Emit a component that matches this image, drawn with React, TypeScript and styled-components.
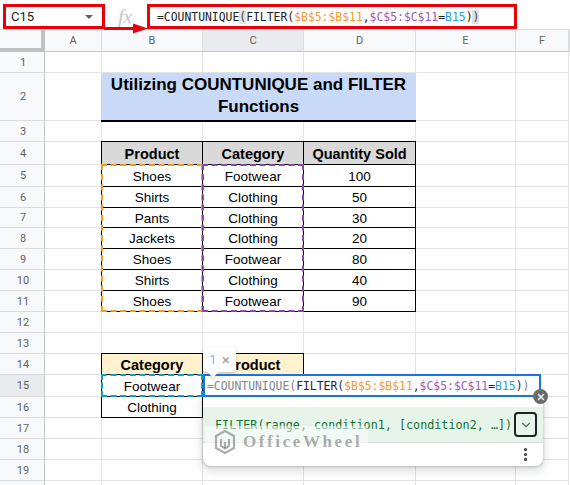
import React from "react";
import styled, { createGlobalStyle, css } from "styled-components";
import { ChevronDown, EllipsisVertical, X } from "lucide-react";

const GlobalStyle = createGlobalStyle`
  body {
    margin: 0;
    background: #fff;
  }
  * {
    box-sizing: border-box;
  }
`;

const COLS = ["A", "B", "C", "D", "E", "F"];
const ROW_HEIGHTS = [21, 48, 21, 23, 22, 21, 20, 21, 21, 21, 21, 21, 21, 21, 22, 21, 21, 21, 21, 21];
const ACTIVE_COL = "C";
const ACTIVE_ROW = 15;

const MONO = `"DejaVu Sans Mono", "Liberation Mono", monospace`;
const ARIAL = `"Liberation Sans", Arial, sans-serif`;

const Page = styled.div`
  position: relative;
  width: 570px;
  height: 485px;
  overflow: hidden;
  background: #fff;
  font-family: Roboto, "Liberation Sans", sans-serif;
`;

/* ---------- formula bar ---------- */

const TopBar = styled.div`
  display: flex;
  align-items: flex-start;
  height: 30px;
  padding-top: 4px;
  border-bottom: 1px solid #dadce0;
`;

const NameBox = styled.div`
  margin-left: 3px;
  width: 102px;
  height: 25px;
  border: 3px solid #e8000b;
  padding: 0 9px 0 5px;
  display: flex;
  align-items: center;
  justify-content: space-between;
  font-size: 13px;
  color: #202124;
`;

const Caret = styled.span`
  width: 0;
  height: 0;
  border-left: 4px solid transparent;
  border-right: 4px solid transparent;
  border-top: 4px solid #5f6368;
`;

const FxLabel = styled.div`
  width: 42px;
  height: 25px;
  display: flex;
  align-items: center;
  justify-content: center;
  font-family: "Liberation Serif", serif;
  font-style: italic;
  font-size: 19px;
  color: #c4c4c4;
  padding-right: 2px;
`;

const FormulaBox = styled.div`
  width: 370px;
  height: 25px;
  border: 3px solid #e8000b;
  padding-left: 7px;
  display: flex;
  align-items: center;
  font-family: ${MONO};
  font-size: 11.4px;
  color: #202124;
  white-space: pre;
`;

const Tok = styled.span<{ $c?: string }>`
  color: ${(p) => p.$c ?? "inherit"};
`;

const Paren = styled.span`
  background: #e3e3e3;
  color: #444;
`;

const ArrowSvg = styled.svg`
  position: absolute;
  left: 100px;
  top: 18px;
  pointer-events: none;
`;

/* ---------- sheet grid ---------- */

type Place = { $c: number; $r: number; $cs?: number; $rs?: number };

// $c is the grid column (1 = row headers, 2 = A ...), $r the sheet row (0 = column headers)
const placed = css<Place>`
  grid-column: ${(p) => p.$c} / span ${(p) => p.$cs ?? 1};
  grid-row: ${(p) => p.$r + 1} / span ${(p) => p.$rs ?? 1};
`;

const Sheet = styled.div`
  display: grid;
  grid-template-columns: 45px 57px 101px 101px 112px 100px 1fr;
  grid-template-rows: 22px ${ROW_HEIGHTS.map((h) => `${h}px`).join(" ")};
`;

const Corner = styled.div<Place>`
  ${placed};
  background: #f8f9fa;
  border-right: 4px solid #c0c0c0;
  border-bottom: 4px solid #c0c0c0;
`;

const ColHeader = styled.div<Place & { $active?: boolean }>`
  ${placed};
  background: ${(p) => (p.$active ? "#e8eaed" : "#f8f9fa")};
  border-right: 1px solid #dcdcdc;
  border-bottom: 1px solid #c4c7c5;
  display: flex;
  align-items: center;
  justify-content: center;
  font-size: 11px;
  color: #5f6368;
`;

const RowHeader = styled.div<Place & { $active?: boolean }>`
  ${placed};
  background: ${(p) => (p.$active ? "#e8eaed" : "#f8f9fa")};
  border-right: 1px solid #c4c7c5;
  border-bottom: 1px solid #dcdcdc;
  display: flex;
  align-items: center;
  justify-content: center;
  font-size: 11px;
  color: #5f6368;
  padding-left: 2px;
`;

const Cell = styled.div<Place>`
  ${placed};
  border-right: 1px solid #e2e3e3;
  border-bottom: 1px solid #e2e3e3;
`;

const Title = styled.div<Place>`
  ${placed};
  z-index: 1;
  margin: 0 0 -1px -1px;
  background: #c9daf8;
  border-bottom: 2px solid #000;
  display: flex;
  align-items: center;
  justify-content: center;
  text-align: center;
  font-family: ${ARIAL};
  font-weight: bold;
  font-size: 17px;
  line-height: 22px;
  color: #000;
  padding-bottom: 1px;
`;

const TableCell = styled.div<Place & { $bg?: string; $bold?: boolean }>`
  ${placed};
  z-index: 1;
  margin: -1px 0 0 -1px;
  border: 1px solid #000;
  background: ${(p) => p.$bg ?? "#fff"};
  display: flex;
  align-items: center;
  justify-content: center;
  font-family: ${ARIAL};
  font-size: ${(p) => (p.$bold ? "14.5px" : "13.5px")};
  font-weight: ${(p) => (p.$bold ? "bold" : "normal")};
  color: #000;
  padding-top: 1px;
`;

const RangeMark = styled.div<Place & { $color: string }>`
  ${placed};
  z-index: 2;
  margin: -1px 0 0 -1px;
  border: 2px dashed ${(p) => p.$color};
  pointer-events: none;
`;

/* ---------- cell editor overlay ---------- */

const Editor = styled.div`
  position: absolute;
  left: 203px;
  top: 374px;
  width: 338px;
  height: 23px;
  z-index: 5;
  background: #fff;
  border: 2px solid #1a73e8;
  padding-left: 2px;
  display: flex;
  align-items: center;
  font-family: ${MONO};
  font-size: 11.4px;
  color: #1f1f3a;
  white-space: pre;
`;

const CountBubble = styled.div`
  position: absolute;
  left: 203px;
  top: 347px;
  width: 33px;
  height: 25px;
  z-index: 6;
  background: #fff;
  border-radius: 4px;
  box-shadow: 0 1px 3px rgba(60, 64, 67, 0.35);
  display: flex;
  align-items: center;
  justify-content: center;
  gap: 5px;
  font-size: 13px;

  &::after {
    content: "";
    position: absolute;
    left: 6px;
    bottom: -4px;
    width: 8px;
    height: 8px;
    background: #fff;
    transform: rotate(45deg);
    box-shadow: 2px 2px 2px rgba(60, 64, 67, 0.15);
  }
`;

const BubbleNum = styled.span`
  color: #8ab4f8;
`;

const BubbleX = styled.span`
  color: #9aa0a6;
  font-size: 15px;
`;

const CloseDot = styled.div`
  position: absolute;
  left: 533px;
  top: 389px;
  width: 15px;
  height: 15px;
  z-index: 7;
  border-radius: 50%;
  background: #6b6b6b;
  display: flex;
  align-items: center;
  justify-content: center;
`;

const Popup = styled.div`
  position: absolute;
  left: 203px;
  top: 397px;
  width: 340px;
  height: 69px;
  z-index: 4;
  background: #fff;
  border-radius: 0 0 8px 8px;
  box-shadow: 0 1px 3px rgba(60, 64, 67, 0.3), 0 4px 8px 3px rgba(60, 64, 67, 0.12);
  padding-top: 10px;
  display: flex;
  flex-direction: column;
`;

const Signature = styled.div`
  height: 36px;
  background: #e6f4ea;
  border-bottom: 1px solid #dadce0;
  display: flex;
  align-items: center;
  justify-content: space-between;
  padding: 0 6px 0 12px;
  font-family: ${MONO};
  font-size: 11.75px;
  color: #137333;
  white-space: pre;
`;

const ExpandButton = styled.div`
  width: 23px;
  height: 25px;
  border: 2px solid #202124;
  border-radius: 4px;
  display: flex;
  align-items: center;
  justify-content: center;
`;

const PopupFooter = styled.div`
  flex: 1;
  display: flex;
  align-items: center;
  justify-content: flex-end;
  padding-right: 9px;
`;

const Watermark = styled.div`
  position: absolute;
  left: 2px;
  top: 29px;
  height: 32px;
  padding: 0 6px 0 8px;
  display: flex;
  align-items: center;
  gap: 6px;
  background: rgba(255, 255, 255, 0.5);
  font-family: "Liberation Serif", serif;
  font-weight: bold;
  font-size: 17px;
  letter-spacing: 2.6px;
  color: rgba(120, 120, 120, 0.6);
  pointer-events: none;
`;

function Logo() {
  return (
    <svg width="24" height="26" viewBox="0 0 24 26" fill="none" stroke="rgba(120,120,120,0.6)" strokeWidth="2.2">
      <path d="M12 2 L21 7 L21 19 L12 24 L3 19 L3 7 Z" />
      <path d="M8 10 L8 17 L12 19.5 L16 17 L16 10" />
      <path d="M12 13 L12 19.5" />
    </svg>
  );
}

const products = [
  ["Shoes", "Footwear", "100"],
  ["Shirts", "Clothing", "50"],
  ["Pants", "Clothing", "30"],
  ["Jackets", "Clothing", "20"],
  ["Shoes", "Footwear", "80"],
  ["Shirts", "Clothing", "40"],
  ["Shoes", "Footwear", "90"],
];

export default function App() {
  return (
    <Page>
      <GlobalStyle />

      <TopBar>
        <NameBox>
          <span>C15</span>
          <Caret />
        </NameBox>
        <FxLabel>fx</FxLabel>
        <FormulaBox>
          <Tok>=COUNTUNIQUE</Tok>
          <Paren>(</Paren>
          <Tok>FILTER(</Tok>
          <Tok $c="#f29a2e">$B$5:$B$11</Tok>
          <Tok>,</Tok>
          <Tok $c="#9c58b6">$C$5:$C$11</Tok>
          <Tok>=</Tok>
          <Tok $c="#22a0da">B15</Tok>
          <Tok>)</Tok>
          <Paren>)</Paren>
        </FormulaBox>
      </TopBar>

      <ArrowSvg width="52" height="20" viewBox="0 0 52 20">
        <path d="M4 10.5 H36" stroke="#e8000b" strokeWidth="3" />
        <path d="M33 5.5 L48 10.5 L33 15.5 Z" fill="#e8000b" />
      </ArrowSvg>

      <Sheet>
        <Corner $c={1} $r={0} />
        {COLS.map((c, i) => (
          <ColHeader key={c} $c={i + 2} $r={0} $active={c === ACTIVE_COL}>
            {c}
          </ColHeader>
        ))}
        <ColHeader $c={8} $r={0} />

        {ROW_HEIGHTS.map((_, i) => (
          <React.Fragment key={i}>
            <RowHeader $c={1} $r={i + 1} $active={i + 1 === ACTIVE_ROW}>
              {i + 1}
            </RowHeader>
            {COLS.map((c, j) => (
              <Cell key={c} $c={j + 2} $r={i + 1} />
            ))}
          </React.Fragment>
        ))}

        <Title $c={3} $r={2} $cs={3}>
          Utilizing COUNTUNIQUE and FILTER
          <br />
          Functions
        </Title>

        {["Product", "Category", "Quantity Sold"].map((h, i) => (
          <TableCell key={h} $c={3 + i} $r={4} $bg="#d9d9d9" $bold>
            {h}
          </TableCell>
        ))}
        {products.map((row, r) =>
          row.map((v, c) => (
            <TableCell key={`${r}-${c}`} $c={3 + c} $r={5 + r}>
              {v}
            </TableCell>
          ))
        )}
        <RangeMark $c={3} $r={5} $rs={7} $color="#f39c1e" />
        <RangeMark $c={4} $r={5} $rs={7} $color="#8e44ad" />

        <TableCell $c={3} $r={14} $bg="#fff2cc" $bold>
          Category
        </TableCell>
        <TableCell $c={4} $r={14} $bg="#fff2cc" $bold>
          Product
        </TableCell>
        <TableCell $c={3} $r={15}>Footwear</TableCell>
        <TableCell $c={4} $r={15} />
        <TableCell $c={3} $r={16}>Clothing</TableCell>
        <TableCell $c={4} $r={16} />
        <RangeMark $c={3} $r={15} $color="#129ec9" />
      </Sheet>

      <CountBubble>
        <BubbleNum>1</BubbleNum>
        <BubbleX>×</BubbleX>
      </CountBubble>

      <Editor>
        <Tok $c="#80868b">=COUNTUNIQUE(</Tok>
        <Tok>FILTER(</Tok>
        <Tok $c="#f29a2e">$B$5:$B$11</Tok>
        <Tok>,</Tok>
        <Tok $c="#9c58b6">$C$5:$C$11</Tok>
        <Tok>=</Tok>
        <Tok $c="#22a0da">B15</Tok>
        <Tok>)</Tok>
        <Tok $c="#80868b">)</Tok>
      </Editor>
      <CloseDot>
        <X size={10} color="#fff" strokeWidth={3.5} />
      </CloseDot>

      <Popup>
        <Signature>
          <span>FILTER(range, condition1, [condition2, …])</span>
          <ExpandButton>
            <ChevronDown size={14} color="#5f6368" strokeWidth={2} />
          </ExpandButton>
        </Signature>
        <PopupFooter>
          <EllipsisVertical size={17} color="#444" strokeWidth={2.5} />
        </PopupFooter>
        <Watermark>
          <Logo />
          <span>OfficeWheel</span>
        </Watermark>
      </Popup>
    </Page>
  );
}
